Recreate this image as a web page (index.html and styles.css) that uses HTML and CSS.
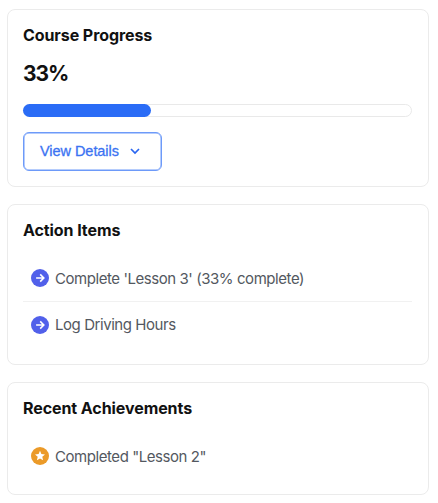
FILE: index.html
```html
<!DOCTYPE html>
<html lang="en">
<head>
    <meta charset="UTF-8">
    <meta name="viewport" content="width=device-width, initial-scale=1.0">
    <title>Course Dashboard</title>
    <link rel="stylesheet" href="styles.css">
</head>
<body>

    <!-- Course Progress -->
    <section class="card progress-card">
        <h2>Course Progress</h2>
        <p class="percent">33%</p>
        <div class="progress">
            <div class="progress-bar" style="width: 33%"></div>
        </div>
        <button class="btn">
            <span>View Details</span>
            <svg class="chevron" viewBox="0 0 12 12"><path d="M2 4l4 4 4-4"/></svg>
        </button>
    </section>

    <!-- Action Items -->
    <section class="card actions-card">
        <h2>Action Items</h2>
        <ul class="list">
            <li>
                <svg class="icon" viewBox="0 0 18 18"><circle cx="9" cy="9" r="9" fill="#5160ea"/><path class="arrow" d="M5.1 9h7.4M9.2 5.4L12.8 9l-3.6 3.6"/></svg>
                <span>Complete 'Lesson 3' (33% complete)</span>
            </li>
            <li>
                <svg class="icon" viewBox="0 0 18 18"><circle cx="9" cy="9" r="9" fill="#5160ea"/><path class="arrow" d="M5.1 9h7.4M9.2 5.4L12.8 9l-3.6 3.6"/></svg>
                <span>Log Driving Hours</span>
            </li>
        </ul>
    </section>

    <!-- Recent Achievements -->
    <section class="card achievements-card">
        <h2>Recent Achievements</h2>
        <ul class="list">
            <li>
                <svg class="icon" viewBox="0 0 18 18"><circle cx="9" cy="9" r="9" fill="#eb9a28"/><path fill="#fff" d="M9 3.8l1.4 3.3 3.6.3-2.7 2.4.8 3.5L9 11.5l-3.1 1.8.8-3.5L4 7.4l3.6-.3z"/></svg>
                <span>Completed "Lesson 2"</span>
            </li>
        </ul>
    </section>

</body>
</html>
```

FILE: styles.css
```css
* {
    box-sizing: border-box;
}
body {
    margin: 0;
    padding: 9px 9px 0 7px;
    background-color: #fff;
    font-family: Inter, "Liberation Sans", sans-serif;
}
.card {
    border: 1px solid #ebebeb;
    border-radius: 8px;
    padding: 14px 16px 0 15px;
    margin-bottom: 17px;
}
.progress-card {
    height: 178px;
}
.actions-card {
    height: 161px;
}
.achievements-card {
    height: 113px;
    margin-bottom: 0;
}
h2 {
    margin: 0;
    font-size: 16px;
    line-height: 22px;
    font-weight: 700;
    letter-spacing: -0.08px;
    color: #111;
}
.percent {
    margin: 13px 0 16px;
    font-size: 21px;
    line-height: 29px;
    font-weight: 700;
    letter-spacing: -1px;
    color: #111;
}
.progress {
    height: 13px;
    border: 1px solid #e9e9e9;
    border-radius: 7px;
}
.progress-bar {
    height: 13px;
    margin: -1px;
    border-radius: 7px;
    background-color: #2a6cf6;
}
.btn {
    display: flex;
    align-items: center;
    gap: 10px;
    width: 139px;
    height: 39px;
    margin-top: 15px;
    padding: 0 0 2px 16px;
    border: 1px solid #6d9af9;
    border-radius: 6px;
    box-shadow: inset 0 0 0 0.5px #6d9af9;
    background-color: #fff;
    color: #3b73f2;
    font-family: "Liberation Sans", Arial, sans-serif;
    font-size: 14.5px;
    letter-spacing: -0.05px;
    -webkit-text-stroke: 0.3px;
    cursor: pointer;
}
.chevron {
    width: 12px;
    height: 12px;
    fill: none;
    stroke: #2a66f0;
    stroke-width: 1.7;
}
.list {
    list-style: none;
    margin: 14px 0 0;
    padding: 0;
}
.list li {
    display: flex;
    align-items: center;
    gap: 6px;
    height: 46px;
    padding-left: 8px;
    font-size: 15px;
    letter-spacing: -0.44px;
    color: #535860;
}
.list li + li {
    border-top: 1px solid #f1f1f1;
}
.icon {
    width: 18px;
    height: 18px;
}
.arrow {
    fill: none;
    stroke: #fff;
    stroke-width: 1.6;
}
```
